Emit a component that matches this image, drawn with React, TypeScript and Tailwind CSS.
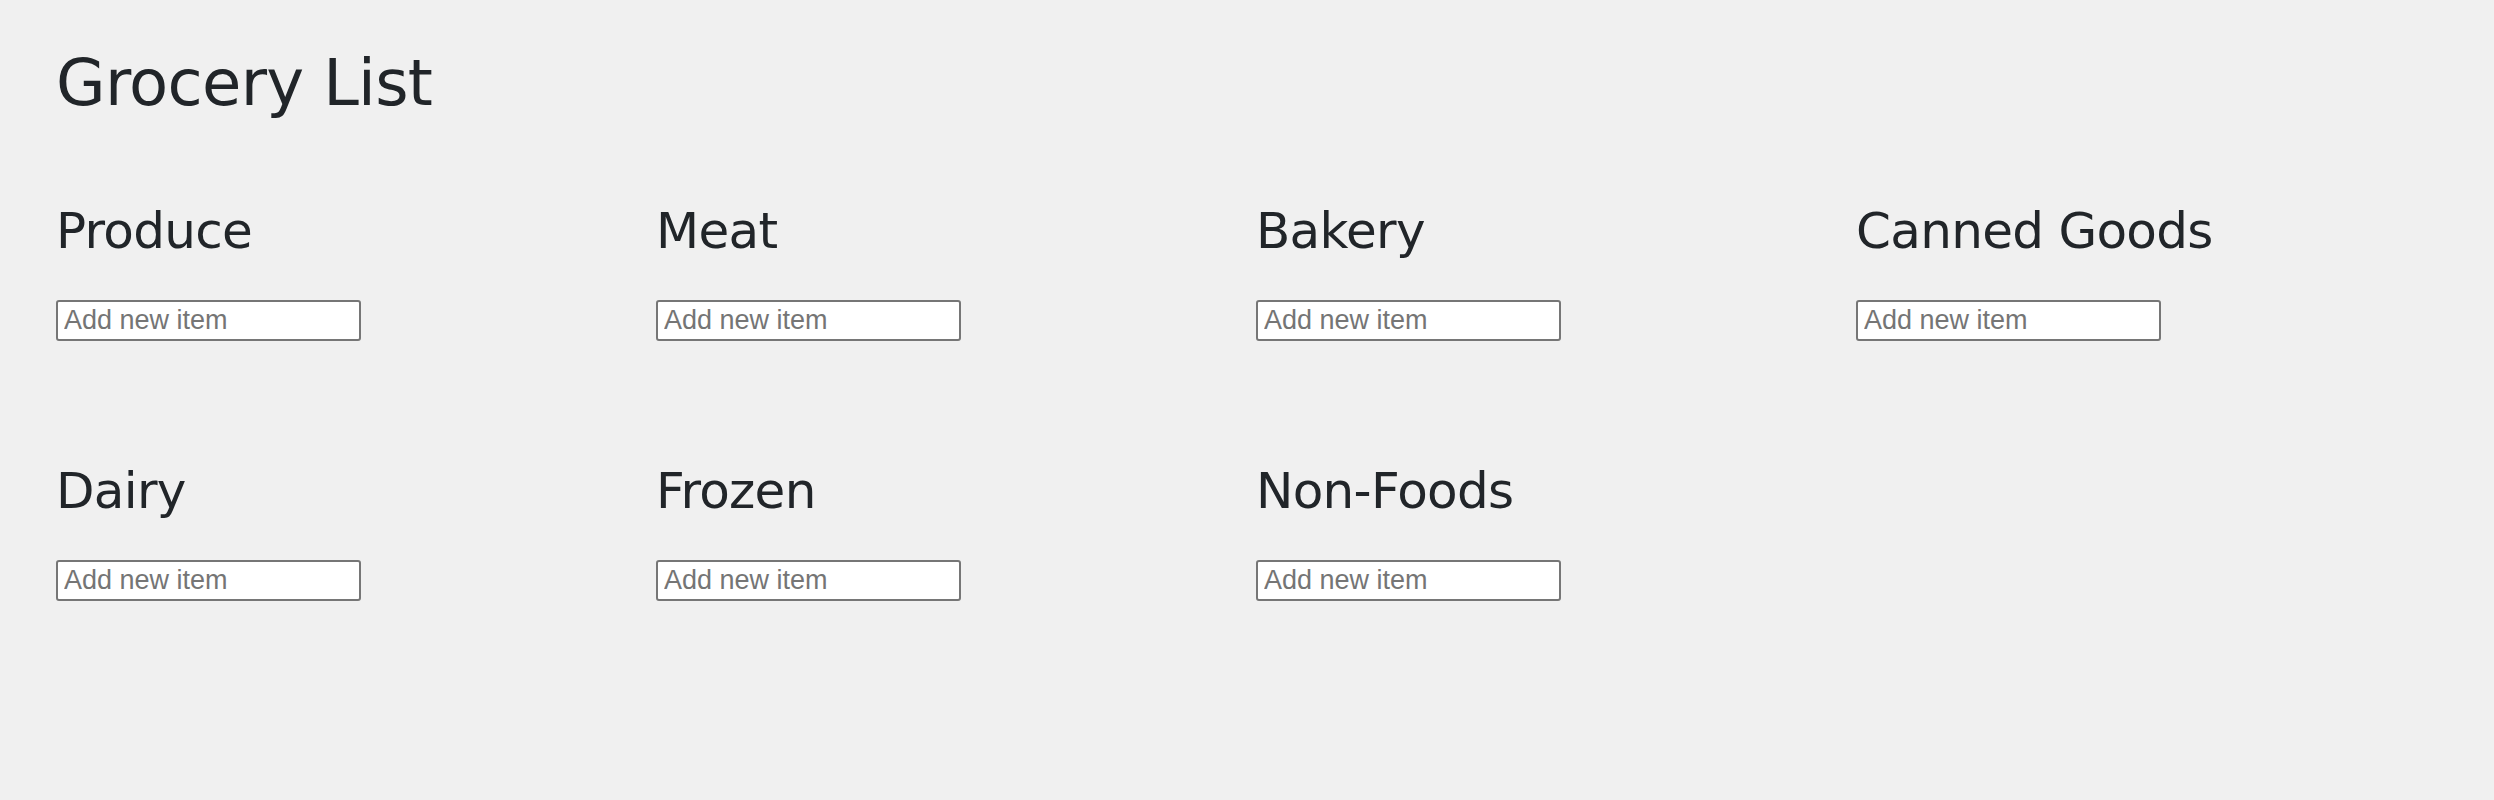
const sections = ["Produce", "Meat", "Bakery", "Canned Goods", "Dairy", "Frozen", "Non-Foods"];

const Section = ({ name }: { name: string }) => {
  return (
    <div className="flex flex-col">
      <h2 className="text-[50px] leading-none font-normal tracking-[-0.7px] text-[#212529]">{name}</h2>
      <input
        type="text"
        placeholder="Add new item"
        className="mt-[44px] w-[305px] h-[41px] bg-white border-2 border-[#767676] rounded-[3px] px-[6px] text-[27px] text-black placeholder:text-[#757575] outline-none font-['Liberation_Sans',Arial,sans-serif]"
      />
    </div>
  );
};

export default function App() {
  return (
    <div className="min-h-[800px] bg-[#f0f0f0] pl-[56px] pt-[51px] font-['DejaVu_Sans',sans-serif]">
      <h1 className="text-[64px] leading-none font-normal tracking-[-0.7px] text-[#212529]">Grocery List</h1>
      <div className="mt-[91px] grid grid-cols-[repeat(4,600px)] gap-y-[125px]">
        {sections.map((s) => (
          <Section key={s} name={s} />
        ))}
      </div>
    </div>
  );
}
